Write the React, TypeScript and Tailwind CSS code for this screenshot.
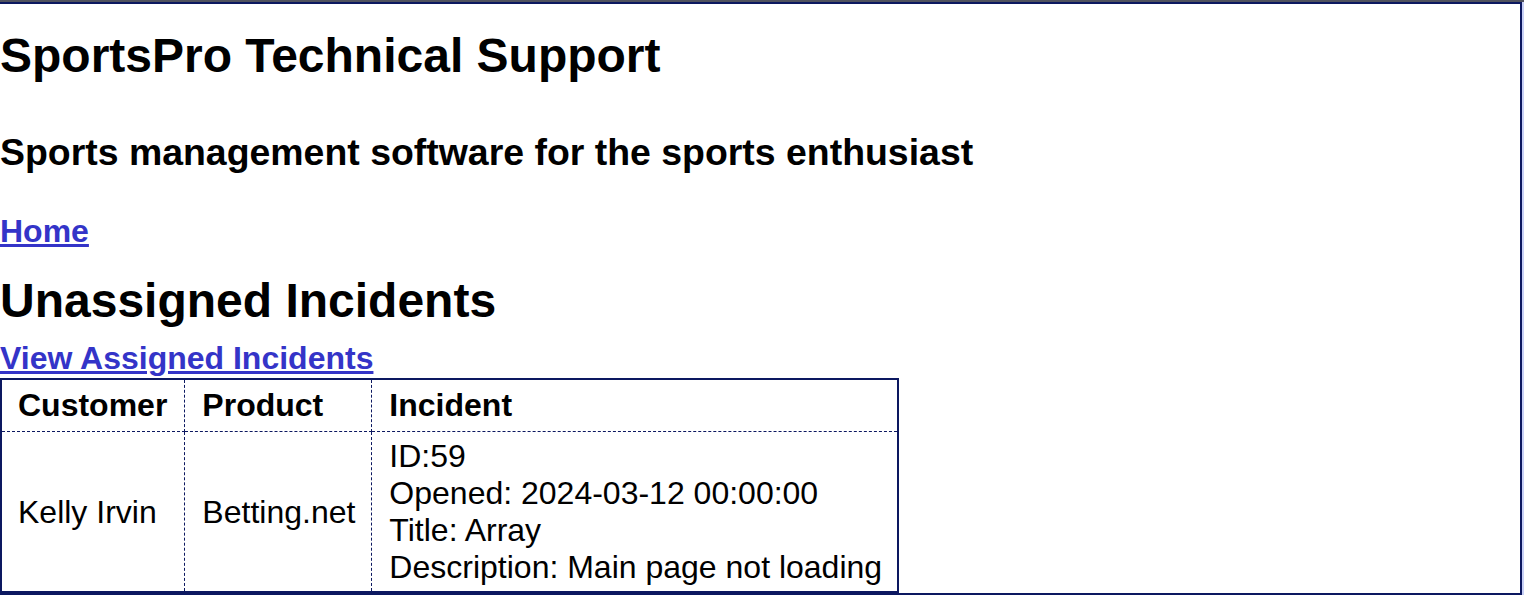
export default function App() {
  return (
    <div className="w-[1524px] h-[596px] overflow-hidden border-t-2 border-[#50525e] bg-white font-['Liberation_Sans',Arial,sans-serif] text-[32px] leading-[37px] text-black">
      <div className="flex">
        <div className="w-[1522px] border-t-2 border-r-2 border-b-2 border-[#0c1860]">
          <h1 className="mt-[24px] text-[48px] font-bold leading-[55px]">SportsPro Technical Support</h1>
          <h3 className="mt-[48px] text-[37.44px] font-bold leading-[43px]">
            Sports management software for the sports enthusiast
          </h3>
          <nav className="mt-[39px]">
            <a href="#" className="font-bold text-[#3434c8] underline">Home</a>
          </nav>
          <h2 className="mt-[23px] text-[48px] font-bold leading-[55px]">Unassigned Incidents</h2>
          <div className="mt-[12px]">
            <a href="#" className="font-bold text-[#3434c8] underline">View Assigned Incidents</a>
          </div>
          <table className="mt-[1px] border-collapse border-2 border-[#0c1860]">
            <thead>
              <tr>
                <th className="border border-dashed border-[#0c1860] pl-[16px] pr-[17px] py-[7px] text-left font-bold">Customer</th>
                <th className="border border-dashed border-[#0c1860] pl-[17px] pr-[16px] py-[7px] text-left font-bold">Product</th>
                <th className="border border-dashed border-[#0c1860] pl-[17px] pr-[15px] py-[7px] text-left font-bold">Incident</th>
              </tr>
            </thead>
            <tbody>
              <tr>
                <td className="border border-dashed border-[#0c1860] pl-[16px] pr-[17px] pt-[6px] pb-[5px] align-middle">Kelly Irvin</td>
                <td className="border border-dashed border-[#0c1860] pl-[17px] pr-[16px] pt-[6px] pb-[5px] align-middle">Betting.net</td>
                <td className="border border-dashed border-[#0c1860] pl-[17px] pr-[15px] pt-[6px] pb-[5px] align-middle">
                  ID:59
                  <br />
                  Opened: 2024-03-12 00:00:00
                  <br />
                  Title: Array
                  <br />
                  Description: Main page not loading
                </td>
              </tr>
            </tbody>
          </table>
        </div>
        <div className="w-[2px] bg-[#c8d0f6]" />
      </div>
    </div>
  );
}
